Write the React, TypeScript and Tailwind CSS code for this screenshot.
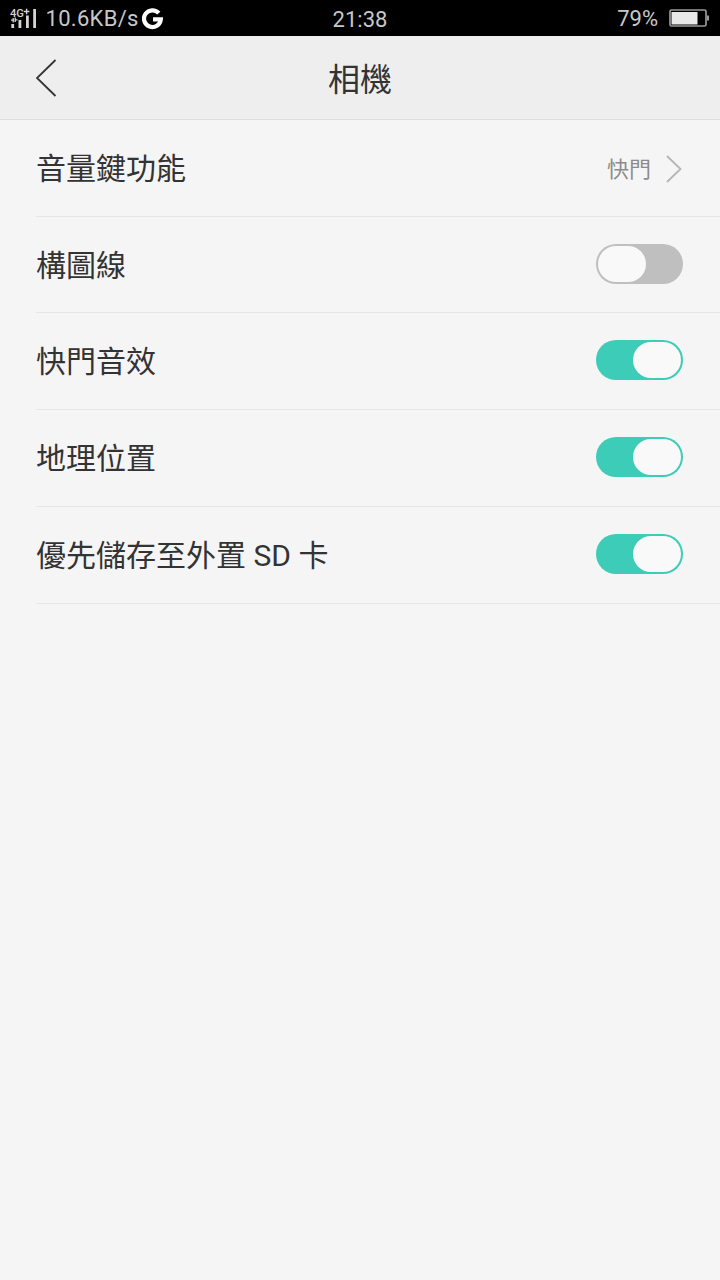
interface SettingItem {
  label: string;
  height: string;
  value?: string;
  enabled?: boolean;
}

const settings: SettingItem[] = [
  { label: '音量鍵功能', height: 'h-[97px]', value: '快門' },
  { label: '構圖線', height: 'h-24', enabled: false },
  { label: '快門音效', height: 'h-[97px]', enabled: true },
  { label: '地理位置', height: 'h-[97px]', enabled: true },
  { label: '優先儲存至外置 SD 卡', height: 'h-[97px]', enabled: true },
];

function SignalIcon() {
  return (
    <svg className="block" width="28" height="22" viewBox="0 0 28 22" fill="#d4d4d4">
      <text x="0" y="8.5" fontSize="10.5" fontWeight="500" fontFamily="Roboto, sans-serif" textLength="14" lengthAdjust="spacingAndGlyphs">
        4G
      </text>
      <path d="M13.8 3.5h5.6M16.6 .8v5.4" stroke="#d4d4d4" strokeWidth="1.4" />
      <path d="M3.2 14.5v-4.5M1 12.2h3M5.2 9.5v4.5M4.5 11.8h3" stroke="#d4d4d4" strokeWidth="1.3" fill="none" />
      <rect x="1.3" y="16" width="2.8" height="4" />
      <rect x="8.5" y="12" width="2.8" height="8" />
      <rect x="16" y="7.5" width="2.8" height="12.5" />
      <rect x="23.2" y="1" width="2.8" height="19" />
    </svg>
  );
}

function GoogleIcon() {
  return (
    <svg className="block" width="22" height="22" viewBox="0 0 22 22" fill="none" stroke="#fff" strokeWidth="4.2">
      <path d="M16.8 5.2A8.4 8.4 0 1 0 18.8 11.4H11" />
    </svg>
  );
}

function BatteryIcon() {
  return (
    <svg className="mb-0.5 block" width="40" height="18" viewBox="0 0 40 18">
      <rect x="1" y="1" width="36" height="16" rx="1.5" fill="none" stroke="#999" strokeWidth="1.7" />
      <rect x="2.5" y="3" width="26" height="12.5" fill="#e8e8e8" />
      <rect x="38" y="6.5" width="2" height="5" fill="#999" />
    </svg>
  );
}

function StatusBar() {
  return (
    <div className="grid h-9 grid-cols-3 items-center bg-black text-[22px] leading-9 text-[#c8c8c8]">
      <div className="flex items-center pl-2.5">
        <SignalIcon />
        <span className="ml-[7.5px] w-[96.5px] tracking-[0.3px] whitespace-nowrap">10.6KB/s</span>
        <GoogleIcon />
      </div>
      <span className="pt-0.5 text-center">21:38</span>
      <div className="flex items-center justify-end pr-[11px]">
        <span className="mr-[11px]">79%</span>
        <BatteryIcon />
      </div>
    </div>
  );
}

function Toggle({ enabled }: { enabled?: boolean }) {
  return (
    <button
      type="button"
      role="switch"
      aria-checked={enabled}
      className={`mb-0.5 flex h-10 w-[87px] items-center rounded-full px-0.5 ${enabled ? 'justify-end bg-[#3dccb7]' : 'bg-[#bfbfbf]'}`}
    >
      <span className="h-9 w-12 rounded-full bg-[#f9f9f9]" />
    </button>
  );
}

export default function App() {
  return (
    <div className="min-h-screen w-full bg-[#f5f5f5] font-['Roboto','Noto_Sans_CJK_TC',sans-serif] text-[#333]">
      <StatusBar />
      <header className="grid h-21 grid-cols-3 items-center border-b border-[#dedede] bg-[#eee] px-9">
        <button type="button" aria-label="Back">
          <svg className="block" width="21" height="38" viewBox="0 0 21 38" fill="none" stroke="#333" strokeWidth="1.8">
            <path d="M19.5 1 1 19l18.5 18" />
          </svg>
        </button>
        <h1 className="pt-1 text-center text-[32px] leading-none">相機</h1>
      </header>

      <ul className="pl-9">
        {settings.map((item) => (
          <li
            key={item.label}
            className={`flex items-center justify-between border-b border-[#e6e6e6] pr-[37px] ${item.height}`}
          >
            <span className="pt-0.5 text-[30px] leading-none">{item.label}</span>
            {item.value ? (
              <span className="flex items-center pt-px text-[22px] leading-none text-[#8c8c8c]">
                <span className="pt-0.5">{item.value}</span>
                <svg className="ml-[15px] mr-px block" width="16" height="28" viewBox="0 0 16 28" fill="none" stroke="#b5b5b5" strokeWidth="1.8">
                  <path d="M1 1l13.5 13L1 27" />
                </svg>
              </span>
            ) : (
              <Toggle enabled={item.enabled} />
            )}
          </li>
        ))}
      </ul>
    </div>
  );
}
